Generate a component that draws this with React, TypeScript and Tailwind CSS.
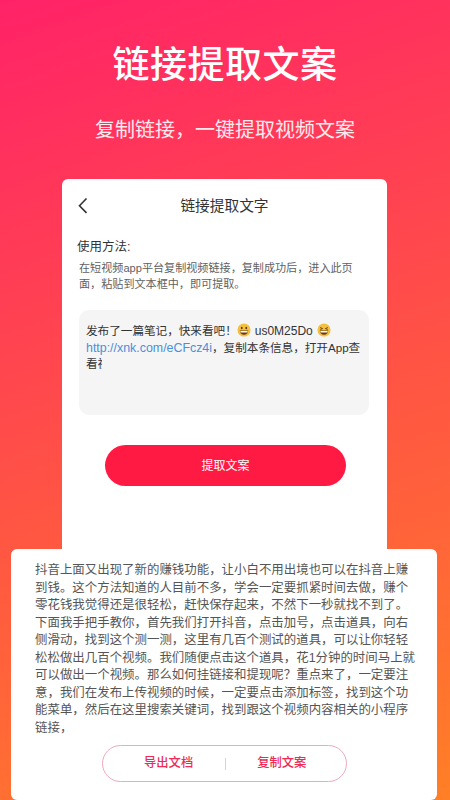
const cjk = { fontFamily: '"Liberation Sans", "Noto Sans CJK SC", sans-serif' };

const sheetLines = [
  '抖音上面又出现了新的赚钱功能，让小白不用出境也可以在抖音上赚',
  '到钱。这个方法知道的人目前不多，学会一定要抓紧时间去做，赚个',
  '零花钱我觉得还是很轻松，赶快保存起来，不然下一秒就找不到了。',
  '下面我手把手教你，首先我们打开抖音，点击加号，点击道具，向右',
  '侧滑动，找到这个测一测，这里有几百个测试的道具，可以让你轻轻',
  '松松做出几百个视频。我们随便点击这个道具，花1分钟的时间马上就',
  '可以做出一个视频。那么如何挂链接和提现呢？重点来了，一定要注',
  '意，我们在发布上传视频的时候，一定要点击添加标签，找到这个功',
  '能菜单，然后在这里搜索关键词，找到跟这个视频内容相关的小程序',
  '链接，',
];

const Grin = ({ tired = false }: { tired?: boolean }) => (
  <svg viewBox="0 0 16 16" className="inline-block w-[14px] h-[14px] align-[-2px]">
    <circle cx="8" cy="8" r="7.5" fill="#f5c040" />
    {tired ? (
      <>
        <path d="M3.6 5.2 6.4 6.4 3.8 7.4" fill="none" stroke="#5a3a10" strokeWidth="1" />
        <path d="M12.4 5.2 9.6 6.4 12.2 7.4" fill="none" stroke="#5a3a10" strokeWidth="1" />
      </>
    ) : (
      <>
        <ellipse cx="5.4" cy="5.8" rx="1" ry="1.4" fill="#5a3a10" />
        <ellipse cx="10.6" cy="5.8" rx="1" ry="1.4" fill="#5a3a10" />
      </>
    )}
    <path d="M3.2 8.6h9.6c0 3-2 4.8-4.8 4.8S3.2 11.6 3.2 8.6z" fill="#6b3a12" />
    <path d="M3.8 9h8.4c0 1-.2 1.4-.4 1.8H4.2C4 10.4 3.8 10 3.8 9z" fill="#ffffff" />
  </svg>
);

export default function App() {
  return (
    <div
      className="relative w-[450px] h-[800px] overflow-hidden bg-[linear-gradient(160deg,#ff2268,#ff7f26)]"
      style={cjk}
    >
      <h1 className="pt-[41px] text-center text-[37px] leading-[50px] tracking-[0.5px] font-medium text-white">
        链接提取文案
      </h1>
      <p className="mt-[26px] text-center text-[20px] leading-[26px] text-white/90">
        复制链接，一键提取视频文案
      </p>

      <div className="mt-[36px] ml-[62px] w-[325px] h-[500px] rounded-[6px] bg-white">
        <div className="relative h-[54px] flex items-center justify-center text-[14.7px] text-[#333333]">
          <svg viewBox="0 0 12 18" className="absolute left-[15px] top-[18px] w-[12px] h-[18px]">
            <path d="M9.5 1.5 2.5 8.7l7 7.2" fill="none" stroke="#333333" strokeWidth="1.6" />
          </svg>
          链接提取文字
        </div>
        <p className="mt-[5px] ml-[15px] text-[12.5px] leading-[18px] text-[#333333]">使用方法:</p>
        <p className="mt-[4px] ml-[17px] w-[290px] text-[11.1px] leading-[16px] text-[#5f5f5f]">
          在短视频app平台复制视频链接，复制成功后，进入此页
          <br />
          面，粘贴到文本框中，即可提取。
        </p>
        <div className="mt-[18px] ml-[17px] w-[290px] h-[105px] rounded-[10px] bg-[#f5f5f5] pt-[13px] pl-[7px] text-[11.6px] leading-[16.6px] text-[#333333]">
          <div className="whitespace-nowrap">
            发布了一篇笔记，快来看吧！
            <Grin />
            <span className="mx-[4px] text-[12px]">us0M25Do</span>
            <Grin tired />
          </div>
          <div className="whitespace-nowrap">
            <span className="text-[12.4px] text-[#4a90d9]">http://xnk.com/eCFcz4i</span>，复制本条信息，打开App查
          </div>
          <div className="whitespace-nowrap">
            看<span className="inline-block w-[4px] overflow-hidden align-bottom">视</span>
          </div>
        </div>
        <button className="mt-[30px] ml-[43px] block w-[241px] h-[41px] rounded-full bg-[#ff1a44] text-[12px] text-white">
          提取文案
        </button>
      </div>

      <div className="absolute left-[11px] top-[549px] w-[426px] h-[251px] rounded-[6px] bg-white">
        <div className="pt-[13px] pl-[24px] text-[12.45px] leading-[17.5px] text-[#555555] whitespace-nowrap">
          {sheetLines.map((line) => (
            <div key={line}>{line}</div>
          ))}
        </div>
        <div className="mt-[8px] ml-[91px] w-[245px] h-[37px] rounded-full border border-[#eeaabb] pl-[41px] flex items-center text-[12.3px] font-medium text-[#ee2a55]">
          <span className="whitespace-nowrap">导出文档</span>
          <span className="ml-[32px] w-px h-[12px] bg-[#f5c5d0]" />
          <span className="ml-[31px] whitespace-nowrap">复制文案</span>
        </div>
      </div>
    </div>
  );
}
